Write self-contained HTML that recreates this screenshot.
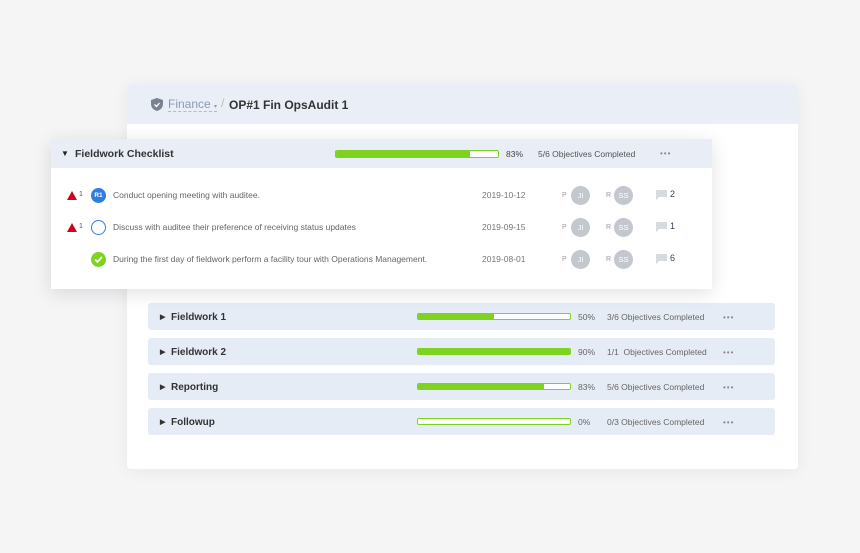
<!DOCTYPE html>
<html><head><style>
*{margin:0;padding:0;box-sizing:border-box}
body{width:860px;height:553px;background:#f5f5f6;font-family:"Liberation Sans",sans-serif;position:relative;overflow:hidden}
.abs{position:absolute}
.back{left:127px;top:84px;width:671px;height:385px;background:#fff;border-radius:4px;box-shadow:0 2px 16px rgba(0,0,0,.06)}
.bh{left:0;top:0;width:671px;height:40px;background:#e9eef7;border-radius:4px 4px 0 0}
.front{left:51px;top:139px;width:661px;height:150px;background:#fff;box-shadow:0 4px 18px rgba(0,0,0,.12)}
.fh{left:0;top:0;width:661px;height:29px;background:#e8edf6}
.row{left:148px;width:627px;height:27px;background:#e6ecf6;border-radius:3px}
.t{font-size:11px;color:#333;font-weight:bold}
.bar{height:7px;border:1px solid #7ed321;border-radius:2px;background:#fff;overflow:hidden}
.bar i{display:block;height:100%;background:#7ed321}
.s{font-size:8.5px;color:#666}
.dots{font-size:8px;color:#888;letter-spacing:1px}
.av{width:19px;height:19px;border-radius:50%;background:#c3c8ce;color:#fff;font-size:7.5px;text-align:center;line-height:19px}
.lb{font-size:7px;color:#999}
.it{font-size:8.5px;color:#666}
.dt{font-size:8.5px;color:#777}
.tri{width:0;height:0;border-left:5px solid transparent;border-right:5px solid transparent;border-bottom:9px solid #d0021b}
</style></head><body>
<div class="abs back">
<div class="abs bh"></div>
<svg class="abs" style="left:24px;top:14px" width="12" height="13" viewBox="0 0 12 13"><path d="M6 0L12 2v4c0 3.5-2.6 6-6 7C2.6 12 0 9.5 0 6V2z" fill="#7a8290"/><path d="M3.5 6.5l2 2 3-3.5" stroke="#fff" stroke-width="1.3" fill="none"/></svg>
<div class="abs" style="left:41px;top:13px;font-size:12px;color:#8a9bb5;border-bottom:1px dashed #bbb">Finance <span style="font-size:6px">▾</span></div>
<div class="abs" style="left:94px;top:12px;font-size:12px;color:#bbb">/</div>
<div class="abs" style="left:102px;top:14px;font-size:12px;font-weight:bold;color:#333">OP#1 Fin OpsAudit 1</div>
</div>

<div class="abs row" style="top:303px"></div>
<div class="abs row" style="top:338px"></div>
<div class="abs row" style="top:373px"></div>
<div class="abs row" style="top:408px"></div>

<div class="abs t" style="left:160px;top:313px;font-size:7px">▶</div><div class="abs t" style="left:171px;top:312px;font-size:10px">Fieldwork 1</div>
<div class="abs t" style="left:160px;top:348px;font-size:7px">▶</div><div class="abs t" style="left:171px;top:347px;font-size:10px">Fieldwork 2</div>
<div class="abs t" style="left:160px;top:383px;font-size:7px">▶</div><div class="abs t" style="left:171px;top:382px;font-size:10px">Reporting</div>
<div class="abs t" style="left:160px;top:418px;font-size:7px">▶</div><div class="abs t" style="left:171px;top:417px;font-size:10px">Followup</div>

<div class="abs bar" style="left:417px;top:313px;width:154px"><i style="width:50%"></i></div>
<div class="abs bar" style="left:417px;top:348px;width:154px"><i style="width:100%"></i></div>
<div class="abs bar" style="left:417px;top:383px;width:154px"><i style="width:83%"></i></div>
<div class="abs bar" style="left:417px;top:418px;width:154px"><i style="width:0"></i></div>
<div class="abs s" style="left:578px;top:312px">50%</div><div class="abs s" style="left:607px;top:312px">3/6 Objectives Completed</div>
<div class="abs s" style="left:578px;top:347px">90%</div><div class="abs s" style="left:607px;top:347px">1/1 &nbsp;Objectives Completed</div>
<div class="abs s" style="left:578px;top:382px">83%</div><div class="abs s" style="left:607px;top:382px">5/6 Objectives Completed</div>
<div class="abs s" style="left:578px;top:417px">0%</div><div class="abs s" style="left:607px;top:417px">0/3 Objectives Completed</div>
<div class="abs dots" style="left:723px;top:313px">•••</div>
<div class="abs dots" style="left:723px;top:348px">•••</div>
<div class="abs dots" style="left:723px;top:383px">•••</div>
<div class="abs dots" style="left:723px;top:418px">•••</div>

<div class="abs front">
<div class="abs fh"></div>
<div class="abs" style="left:10px;top:10px;font-size:8px;color:#222">▼</div>
<div class="abs t" style="left:24px;top:9px;font-size:10.5px">Fieldwork Checklist</div>
<div class="abs bar" style="left:284px;top:11px;width:164px;height:8px"><i style="width:83%"></i></div>
<div class="abs s" style="left:455px;top:10px;color:#444">83%</div>
<div class="abs s" style="left:487px;top:10px;color:#555">5/6 Objectives Completed</div>
<div class="abs dots" style="left:609px;top:10px">•••</div>

<div class="abs tri" style="left:16px;top:52px"></div><div class="abs" style="left:28px;top:52px;font-size:7px;color:#555">1</div>
<div class="abs" style="left:40px;top:49px;width:15px;height:15px;border-radius:50%;background:#2e7de1;color:#fff;font-size:6.5px;font-weight:bold;text-align:center;line-height:15px">R1</div>
<div class="abs it" style="left:62px;top:51px">Conduct opening meeting with auditee.</div>

<div class="abs tri" style="left:16px;top:84px"></div><div class="abs" style="left:28px;top:84px;font-size:7px;color:#555">1</div>
<div class="abs" style="left:40px;top:81px;width:15px;height:15px;border-radius:50%;border:1.5px solid #2e7de1"></div>
<div class="abs it" style="left:62px;top:83px">Discuss with auditee their preference of receiving status updates</div>

<div class="abs" style="left:40px;top:113px;width:15px;height:15px;border-radius:50%;background:#7ed321"></div>
<svg class="abs" style="left:40px;top:113px" width="15" height="15"><path d="M4 7.5l2.5 2.5 4.5-5" stroke="#fff" stroke-width="1.8" fill="none"/></svg>
<div class="abs it" style="left:62px;top:115px">During the first day of fieldwork perform a facility tour with Operations Management.</div>

<div class="abs dt" style="left:431px;top:51px">2019-10-12</div>
<div class="abs dt" style="left:431px;top:83px">2019-09-15</div>
<div class="abs dt" style="left:431px;top:115px">2019-08-01</div>

<div class="abs lb" style="left:511px;top:53px">P</div><div class="abs av" style="left:520px;top:47px">JI</div>
<div class="abs lb" style="left:555px;top:53px">R</div><div class="abs av" style="left:563px;top:47px">SS</div>
<div class="abs lb" style="left:511px;top:85px">P</div><div class="abs av" style="left:520px;top:79px">JI</div>
<div class="abs lb" style="left:555px;top:85px">R</div><div class="abs av" style="left:563px;top:79px">SS</div>
<div class="abs lb" style="left:511px;top:117px">P</div><div class="abs av" style="left:520px;top:111px">JI</div>
<div class="abs lb" style="left:555px;top:117px">R</div><div class="abs av" style="left:563px;top:111px">SS</div>

<svg class="abs" style="left:605px;top:51px" width="11" height="10"><path d="M0 0h11v7H3l-3 3z" fill="#d5dae0"/></svg><div class="abs" style="left:619px;top:50px;font-size:9px;color:#345">2</div>
<svg class="abs" style="left:605px;top:83px" width="11" height="10"><path d="M0 0h11v7H3l-3 3z" fill="#d5dae0"/></svg><div class="abs" style="left:619px;top:82px;font-size:9px;color:#345">1</div>
<svg class="abs" style="left:605px;top:115px" width="11" height="10"><path d="M0 0h11v7H3l-3 3z" fill="#d5dae0"/></svg><div class="abs" style="left:619px;top:114px;font-size:9px;color:#345">6</div>
</div>
</body></html>
